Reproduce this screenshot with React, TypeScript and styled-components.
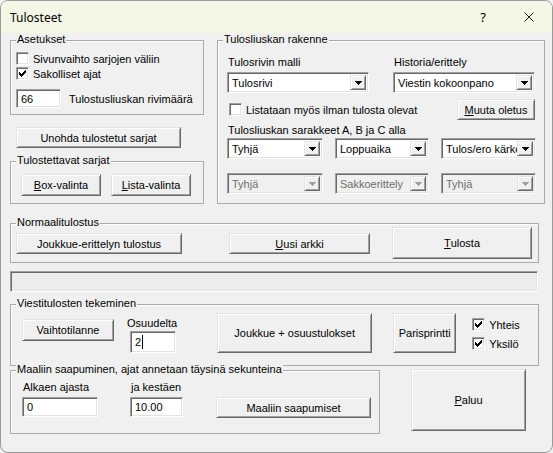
import React from 'react';
import styled, { createGlobalStyle } from 'styled-components';

const Global = createGlobalStyle`
  html, body { margin: 0; padding: 0; background: #f0f0f0; }
  body { font-family: "Liberation Sans", Arial, sans-serif; font-size: 11px; color: #000; }
  * { box-sizing: border-box; }
`;

const Window = styled.div`
  width: 553px;
  height: 453px;
  border: 1px solid #9a9a9a;
  border-radius: 8px;
  overflow: hidden;
  display: flex;
  flex-direction: column;
  background: #f0f0f0;
`;

const TitleBar = styled.div`
  height: 32px;
  flex: none;
  background: #f4f7e6;
  display: flex;
  align-items: center;
  padding-left: 9px;
  font-family: "Segoe UI", "Noto Sans", sans-serif;
  font-size: 12px;
  color: #000;
`;

const TitleText = styled.div`
  flex: 1;
`;

const Caption = styled.div`
  width: 46px;
  height: 100%;
  display: flex;
  align-items: center;
  justify-content: center;
  font-size: 13px;
`;

const Body = styled.div`
  flex: 1;
  display: flex;
  flex-direction: column;
  padding: 7px 0 0 9px;
`;

const TopRow = styled.div`
  display: flex;
  gap: 13px;
`;

const LeftColumn = styled.div`
  width: 194px;
  display: flex;
  flex-direction: column;
`;

const Group = styled.div<{ $w: number; $h: number }>`
  position: relative;
  width: ${p => p.$w}px;
  height: ${p => p.$h}px;
  flex: none;
  border: 1px solid #a9a9a9;
  box-shadow: inset 1px 1px #ffffff;
`;

const Legend = styled.span`
  position: absolute;
  top: -8px;
  left: 5px;
  padding: 0 1px;
  line-height: 13px;
  background: #f0f0f0;
  white-space: nowrap;
`;

const SettingsGroup = styled(Group)`
  padding: 11px 0 0 5px;
  display: flex;
  flex-direction: column;
  gap: 2px;
`;

const SeriesGroup = styled(Group)`
  margin-top: 13px;
  padding: 12px 0 0 10px;
  display: flex;
  gap: 10px;
`;

const StructureGroup = styled(Group)`
  padding: 14px 0 0 9px;
`;

const NormalGroup = styled(Group)`
  margin-top: 19px;
  padding: 0 0 0 5px;
  display: flex;
  align-items: center;
`;

const RelayGroup = styled(Group)`
  margin-top: 12px;
  padding: 8px 0 0 11px;
  display: flex;
  align-items: flex-start;
`;

const FinishGroup = styled(Group)`
  margin-top: 1px;
  padding: 9px 0 0 11px;
  display: flex;
  align-items: flex-start;
`;

const Button = styled.button<{ $w: number; $h: number; $ml?: number; $mt?: number }>`
  width: ${p => p.$w}px;
  height: ${p => p.$h}px;
  margin-left: ${p => p.$ml ?? 0}px;
  margin-top: ${p => p.$mt ?? 0}px;
  flex: none;
  padding: 0;
  font: inherit;
  color: #000;
  background: #f0f0f0;
  border: 1px solid;
  border-color: #e3e3e3 #696969 #696969 #e3e3e3;
  box-shadow: inset 1px 1px #ffffff, inset -1px -1px #a0a0a0;
  display: flex;
  align-items: center;
  justify-content: center;
  white-space: nowrap;
`;

const Sunken = styled.div`
  border: 1px solid;
  border-color: #a0a0a0 #ffffff #ffffff #a0a0a0;
  box-shadow: inset 1px 1px #696969, inset -1px -1px #e3e3e3;
`;

const TextField = styled(Sunken)<{ $w: number; $h: number; $ml?: number; $mt?: number }>`
  width: ${p => p.$w}px;
  height: ${p => p.$h}px;
  margin-left: ${p => p.$ml ?? 0}px;
  margin-top: ${p => p.$mt ?? 0}px;
  flex: none;
  background: #ffffff;
  padding: 0 4px;
  display: flex;
  align-items: center;
  white-space: nowrap;
`;

const Caret = styled.span`
  display: inline-block;
  width: 1px;
  height: 14px;
  background: #000;
  margin-left: 1px;
`;

const Row = styled.div<{ $mt?: number }>`
  display: flex;
  align-items: center;
  margin-top: ${p => p.$mt ?? 0}px;
`;

const InlineLabel = styled.span<{ $ml: number }>`
  margin-left: ${p => p.$ml}px;
  white-space: nowrap;
`;

const CheckRow = styled.div<{ $pl?: number }>`
  display: flex;
  align-items: center;
  gap: 4px;
  height: 13px;
  padding-left: ${p => p.$pl ?? 0}px;
  white-space: nowrap;
`;

const CheckBox = styled(Sunken)`
  width: 13px;
  height: 13px;
  flex: none;
  background: #ffffff;
  display: flex;
  align-items: center;
  justify-content: center;
`;

const TwoCols = styled.div<{ $mt?: number }>`
  display: grid;
  grid-template-columns: 142px 142px;
  column-gap: 24px;
  align-items: center;
  margin-top: ${p => p.$mt ?? 0}px;
`;

const ThreeCols = styled.div<{ $mt?: number }>`
  display: grid;
  grid-template-columns: 96px 94px 95px;
  column-gap: 12px;
  margin-top: ${p => p.$mt ?? 0}px;
`;

const FieldLabel = styled.div<{ $mt?: number }>`
  line-height: 14px;
  padding-left: 1px;
  white-space: nowrap;
  margin-top: ${p => p.$mt ?? 0}px;
`;

const EndCell = styled.div`
  justify-self: end;
`;

const ComboBox = styled(Sunken)<{ $disabled?: boolean }>`
  height: 21px;
  background: ${p => (p.$disabled ? '#f0f0f0' : '#ffffff')};
  color: ${p => (p.$disabled ? '#6d6d6d' : '#000')};
  display: flex;
  align-items: stretch;
  padding: 2px;
  overflow: hidden;
`;

const ComboText = styled.div`
  flex: 1;
  min-width: 0;
  overflow: hidden;
  white-space: nowrap;
  padding-left: 2px;
  display: flex;
  align-items: center;
`;

const ComboArrow = styled.div`
  width: 16px;
  flex: none;
  background: #f0f0f0;
  border: 1px solid;
  border-color: #e3e3e3 #696969 #696969 #e3e3e3;
  box-shadow: inset 1px 1px #ffffff, inset -1px -1px #a0a0a0;
  display: flex;
  align-items: center;
  justify-content: center;
`;

const Progress = styled(Sunken)`
  width: 528px;
  height: 21px;
  margin-top: 8px;
  background: #ececec;
`;

const StackCol = styled.div<{ $ml?: number; $mt?: number }>`
  display: flex;
  flex-direction: column;
  flex: none;
  margin-left: ${p => p.$ml ?? 0}px;
  margin-top: ${p => p.$mt ?? 0}px;
`;

const CheckStack = styled.div`
  display: flex;
  flex-direction: column;
  gap: 6px;
  margin-left: 16px;
  margin-top: 5px;
`;

const BottomRow = styled.div`
  display: flex;
  align-items: flex-start;
  margin-top: 3px;
`;

const Arrow: React.FC<{ disabled?: boolean }> = ({ disabled }) => {
  const c = disabled ? '#a0a0a0' : '#000';
  return (
    <svg width="7" height="4" viewBox="0 0 7 4" shapeRendering="crispEdges">
      <rect x="0" y="0" width="7" height="1" fill={c} />
      <rect x="1" y="1" width="5" height="1" fill={c} />
      <rect x="2" y="2" width="3" height="1" fill={c} />
      <rect x="3" y="3" width="1" height="1" fill={c} />
    </svg>
  );
};

const Combo: React.FC<{ value: string; disabled?: boolean }> = ({ value, disabled }) => (
  <ComboBox $disabled={disabled}>
    <ComboText>{value}</ComboText>
    <ComboArrow>
      <Arrow disabled={disabled} />
    </ComboArrow>
  </ComboBox>
);

const CheckMark = () => (
  <svg width="7" height="7" viewBox="0 0 7 7" shapeRendering="crispEdges">
    <rect x="6" y="0" width="1" height="1" fill="#000" />
    <rect x="5" y="1" width="2" height="1" fill="#000" />
    <rect x="0" y="2" width="1" height="1" fill="#000" />
    <rect x="4" y="2" width="3" height="1" fill="#000" />
    <rect x="0" y="3" width="2" height="1" fill="#000" />
    <rect x="3" y="3" width="3" height="1" fill="#000" />
    <rect x="0" y="4" width="5" height="1" fill="#000" />
    <rect x="1" y="5" width="3" height="1" fill="#000" />
    <rect x="2" y="6" width="1" height="1" fill="#000" />
  </svg>
);

const Check: React.FC<{ label: string; checked?: boolean; pl?: number }> = ({ label, checked, pl }) => (
  <CheckRow $pl={pl}>
    <CheckBox>{checked && <CheckMark />}</CheckBox>
    <span>{label}</span>
  </CheckRow>
);

export default function App() {
  return (
    <>
      <Global />
      <Window>
        <TitleBar>
          <TitleText>Tulosteet</TitleText>
          <Caption>?</Caption>
          <Caption>
            <svg width="10" height="10" viewBox="0 0 10 10">
              <path d="M0.5 0.5L9.5 9.5M9.5 0.5L0.5 9.5" stroke="#1a1a1a" strokeWidth="1" />
            </svg>
          </Caption>
        </TitleBar>
        <Body>
          <TopRow>
            <LeftColumn>
              <SettingsGroup $w={194} $h={75}>
                <Legend>Asetukset</Legend>
                <Check label="Sivunvaihto sarjojen väliin" />
                <Check label="Sakolliset ajat" checked />
                <Row $mt={7}>
                  <TextField $w={45} $h={19}>66</TextField>
                  <InlineLabel $ml={8}>Tulostusliuskan rivimäärä</InlineLabel>
                </Row>
              </SettingsGroup>
              <Button $w={165} $h={21} $ml={6} $mt={12}>Unohda tulostetut sarjat</Button>
              <SeriesGroup $w={194} $h={43}>
                <Legend>Tulostettavat sarjat</Legend>
                <Button $w={80} $h={22}><u>B</u>ox-valinta</Button>
                <Button $w={80} $h={22}><u>L</u>ista-valinta</Button>
              </SeriesGroup>
            </LeftColumn>
            <StructureGroup $w={328} $h={164}>
              <Legend>Tulosliuskan rakenne</Legend>
              <TwoCols>
                <FieldLabel>Tulosrivin malli</FieldLabel>
                <FieldLabel>Historia/erittely</FieldLabel>
              </TwoCols>
              <TwoCols $mt={3}>
                <Combo value="Tulosrivi" />
                <Combo value="Viestin kokoonpano" />
              </TwoCols>
              <TwoCols $mt={6}>
                <Check label="Listataan myös ilman tulosta olevat" pl={2} />
                <EndCell>
                  <Button $w={78} $h={21}><u>M</u>uuta oletus</Button>
                </EndCell>
              </TwoCols>
              <FieldLabel $mt={3}>Tulosliuskan sarakkeet A, B ja C alla</FieldLabel>
              <ThreeCols $mt={1}>
                <Combo value="Tyhjä" />
                <Combo value="Loppuaika" />
                <Combo value="Tulos/ero kärkeen" />
              </ThreeCols>
              <ThreeCols $mt={14}>
                <Combo value="Tyhjä" disabled />
                <Combo value="Sakkoerittely" disabled />
                <Combo value="Tyhjä" disabled />
              </ThreeCols>
            </StructureGroup>
          </TopRow>

          <NormalGroup $w={529} $h={40}>
            <Legend>Normaalitulostus</Legend>
            <Button $w={166} $h={21} $mt={1}>Joukkue-erittelyn tulostus</Button>
            <Button $w={141} $h={21} $ml={47} $mt={1}><u>U</u>usi arkki</Button>
            <Button $w={140} $h={32} $ml={22} $mt={-1}><u>T</u>ulosta</Button>
          </NormalGroup>

          <Progress />

          <RelayGroup $w={529} $h={62}>
            <Legend>Viestitulosten tekeminen</Legend>
            <Button $w={92} $h={22} $mt={6}>Vaihtotilanne</Button>
            <StackCol $ml={12} $mt={3}>
              <FieldLabel>Osuudelta</FieldLabel>
              <TextField $w={46} $h={22} $ml={4} $mt={1}>
                2<Caret />
              </TextField>
            </StackCol>
            <Button $w={155} $h={40} $ml={40}>Joukkue + osuustulokset</Button>
            <Button $w={63} $h={40} $ml={21}>Parisprintti</Button>
            <CheckStack>
              <Check label="Yhteis" checked />
              <Check label="Yksilö" checked />
            </CheckStack>
          </RelayGroup>

          <BottomRow>
            <FinishGroup $w={370} $h={64}>
              <Legend>Maaliin saapuminen, ajat annetaan täysinä sekunteina</Legend>
              <StackCol>
                <FieldLabel>Alkaen ajasta</FieldLabel>
                <TextField $w={76} $h={20} $mt={3}>0</TextField>
              </StackCol>
              <StackCol $ml={32}>
                <FieldLabel>ja kestäen</FieldLabel>
                <TextField $w={53} $h={20} $mt={3}>10.00</TextField>
              </StackCol>
              <Button $w={155} $h={21} $ml={33} $mt={17}>Maaliin saapumiset</Button>
            </FinishGroup>
            <Button $w={115} $h={62} $ml={31}><u>P</u>aluu</Button>
          </BottomRow>
        </Body>
      </Window>
    </>
  );
}
